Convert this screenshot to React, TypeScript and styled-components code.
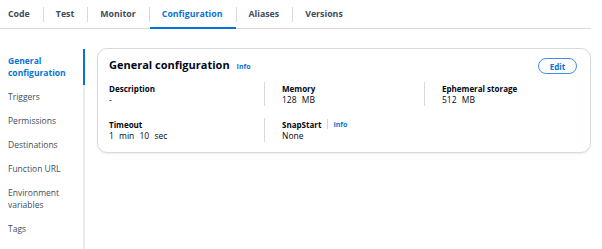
import React from "react";
import styled, { createGlobalStyle } from "styled-components";

const Global = createGlobalStyle`
  html, body { margin: 0; padding: 0; background: #ffffff; }
  body { font-family: "Open Sans", "Noto Sans", Arial, sans-serif; color: #000716; }
  * { box-sizing: border-box; }
`;

const Page = styled.div`
  width: 602px;
  height: 249px;
  overflow: hidden;
  display: flex;
  flex-direction: column;
`;

const TabBar = styled.div`
  display: flex;
  align-items: stretch;
  height: 29px;
  width: 591px;
  border-bottom: 1px solid #d5dbdb;
`;

const Tab = styled.div<{ $active?: boolean; $first?: boolean }>`
  position: relative;
  display: flex;
  align-items: center;
  padding: 0 13px 0 ${(p) => (p.$first ? "8px" : "12px")};
  font-size: 8.8px;
  font-weight: 700;
  color: ${(p) => (p.$active ? "#0972d3" : "#414d5c")};
  border-bottom: 2px solid ${(p) => (p.$active ? "#0972d3" : "transparent")};
  margin-bottom: -1px;
`;

const TabSep = styled.div`
  width: 1px;
  align-self: center;
  height: 15px;
  background: #d5dbdb;
`;

const Body = styled.div`
  flex: 1;
  display: flex;
  padding-top: 19px;
`;

const SideNav = styled.div`
  width: 85px;
  flex: none;
  margin-top: 1px;
  border-right: 2px solid #e9ebed;
  display: flex;
  flex-direction: column;
`;

const NavItem = styled.div<{ $active?: boolean }>`
  position: relative;
  padding: 6px 8px;
  font-size: 8.5px;
  line-height: 12px;
  font-weight: ${(p) => (p.$active ? 700 : 400)};
  color: ${(p) => (p.$active ? "#0972d3" : "#414d5c")};
  &::after {
    content: "";
    display: ${(p) => (p.$active ? "block" : "none")};
    position: absolute;
    right: -2px;
    top: 0;
    bottom: 0;
    width: 2px;
    background: #0972d3;
  }
`;

const Main = styled.div`
  flex: 1;
  padding: 0 11px 0 12px;
`;

const Card = styled.div`
  border: 1px solid #d5dbdb;
  border-radius: 10px;
  box-shadow: 0 1px 2px rgba(0, 7, 22, 0.08);
  padding: 9px 12px 10px 11px;
`;

const CardHeader = styled.div`
  display: flex;
  align-items: center;
  justify-content: space-between;
  height: 16px;
  margin-bottom: 8px;
`;

const Title = styled.div`
  display: flex;
  align-items: baseline;
  gap: 7px;
  margin-top: -3px;
  font-size: 11px;
  font-weight: 700;
  color: #000716;
`;

const InfoLink = styled.span`
  font-size: 7px;
  font-weight: 700;
  color: #0972d3;
`;

const EditButton = styled.button`
  height: 16px;
  width: 39px;
  border: 1px solid #3f8fe0;
  border-radius: 8px;
  background: #ffffff;
  color: #0972d3;
  font-family: inherit;
  font-size: 8px;
  font-weight: 700;
  padding: 0;
  margin-right: 1px;
`;

const Grid = styled.div`
  display: grid;
  grid-template-columns: 155px 160px 1fr;
  row-gap: 12px;
`;

const Cell = styled.div<{ $divider?: boolean }>`
  padding-left: ${(p) => (p.$divider ? "17px" : "0")};
  border-left: ${(p) => (p.$divider ? "1px solid #d5dbdb" : "none")};
  display: flex;
  flex-direction: column;
`;

const LabelRow = styled.div`
  display: flex;
  align-items: center;
  height: 12px;
`;

const Label = styled.span`
  font-size: 8px;
  font-weight: 700;
  color: #000716;
`;

const LabelSep = styled.span`
  width: 1px;
  height: 10px;
  background: #d5dbdb;
  margin: 0 5px 0 6px;
`;

const Value = styled.div`
  height: 12px;
  line-height: 12px;
  font-size: 8.5px;
  color: #000716;
  word-spacing: 3px;
`;

const tabs = ["Code", "Test", "Monitor", "Configuration", "Aliases", "Versions"];
const navItems = [
  "General configuration",
  "Triggers",
  "Permissions",
  "Destinations",
  "Function URL",
  "Environment variables",
  "Tags",
];

export default function App() {
  return (
    <Page>
      <Global />
      <TabBar>
        {tabs.map((t, i) => (
          <React.Fragment key={t}>
            {i > 0 && <TabSep />}
            <Tab $first={i === 0} $active={t === "Configuration"}>
              {t}
            </Tab>
          </React.Fragment>
        ))}
      </TabBar>
      <Body>
        <SideNav>
          {navItems.map((n, i) => (
            <NavItem key={n} $active={i === 0}>
              {n}
            </NavItem>
          ))}
        </SideNav>
        <Main>
          <Card>
            <CardHeader>
              <Title>
                General configuration <InfoLink>Info</InfoLink>
              </Title>
              <EditButton>Edit</EditButton>
            </CardHeader>
            <Grid>
              <Cell>
                <LabelRow>
                  <Label>Description</Label>
                </LabelRow>
                <Value>-</Value>
              </Cell>
              <Cell $divider>
                <LabelRow>
                  <Label>Memory</Label>
                </LabelRow>
                <Value>128 MB</Value>
              </Cell>
              <Cell $divider>
                <LabelRow>
                  <Label>Ephemeral storage</Label>
                </LabelRow>
                <Value>512 MB</Value>
              </Cell>
              <Cell>
                <LabelRow>
                  <Label>Timeout</Label>
                </LabelRow>
                <Value>1 min 10 sec</Value>
              </Cell>
              <Cell $divider>
                <LabelRow>
                  <Label>SnapStart</Label>
                  <LabelSep />
                  <InfoLink>Info</InfoLink>
                </LabelRow>
                <Value>None</Value>
              </Cell>
            </Grid>
          </Card>
        </Main>
      </Body>
    </Page>
  );
}
